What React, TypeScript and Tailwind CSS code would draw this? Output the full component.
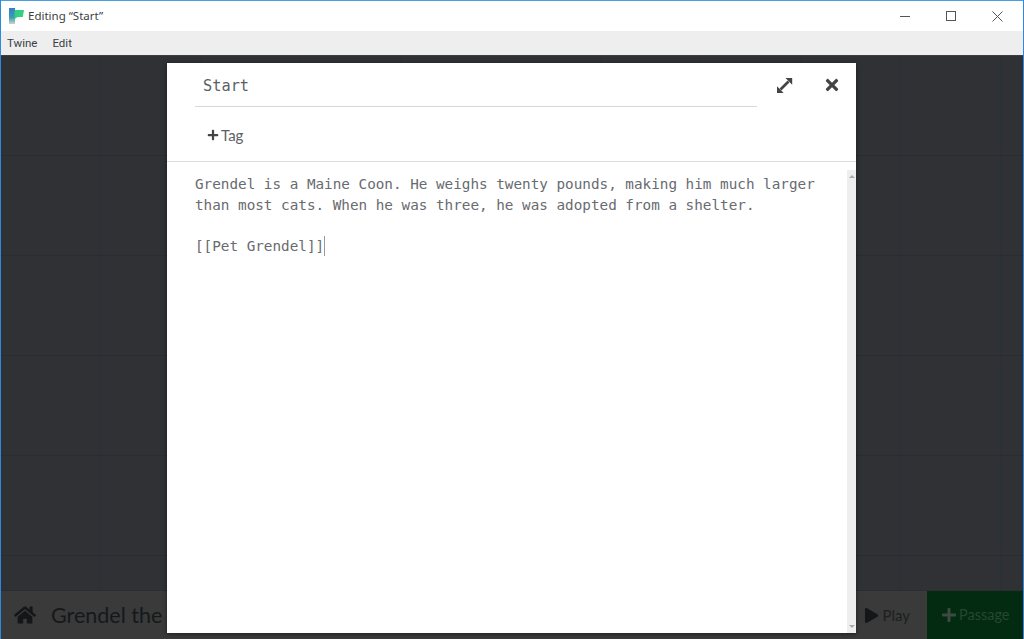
import { FaHome, FaPlay, FaPlus, FaTimes } from "react-icons/fa";

const lato = "font-['Lato','Open_Sans',sans-serif]";
const ui = "font-['Noto_Sans','Open_Sans',sans-serif]";
const menu = "font-['Roboto','Noto_Sans',sans-serif]";
const mono = "font-['DejaVu_Sans_Mono','Liberation_Mono',monospace]";

function TwineLogo() {
  return (
    <svg width="15" height="16" viewBox="0 0 15 16" className="shrink-0">
      <defs>
        <linearGradient id="twl" x1="0" y1="0" x2="0" y2="1">
          <stop offset="0" stopColor="#2f7fd0" />
          <stop offset="0.6" stopColor="#3f9bb0" />
          <stop offset="1" stopColor="#c8d8c8" />
        </linearGradient>
      </defs>
      <rect x="0" y="0" width="6" height="16" fill="url(#twl)" />
      <path d="M5.5 2H15l-1.2 7H10c-2.5 0-3.5 1-4.5 3z" fill="#34cf80" />
    </svg>
  );
}

function ExpandIcon() {
  return (
    <svg width="17" height="17" viewBox="0 0 17 17" className="shrink-0" fill="#444">
      <path d="M9.5 1h6.7v6.7z" />
      <path d="M1 9.3V16h6.7z" />
      <path d="M12.5 4.5l-8 8" stroke="#444" strokeWidth="2.6" fill="none" />
    </svg>
  );
}

export default function App() {
  return (
    <div className={`w-[1024px] h-[639px] flex flex-col overflow-hidden bg-white border-x border-[#2a8ae0] ${lato}`}>
      <div className="h-[31px] shrink-0 border-t border-[#4a9fe0] flex items-center pl-[8px] bg-white">
        <TwineLogo />
        <span className={`ml-[4px] text-[11.5px] text-[#3a3f45] ${ui}`}>Editing “Start”</span>
        <div className="ml-auto flex items-center h-full pr-[3px]">
          <div className="w-[46px] h-full flex items-center justify-center">
            <div className="w-[10px] h-px bg-[#555]" />
          </div>
          <div className="w-[46px] h-full flex items-center justify-center">
            <div className="w-[10px] h-[10px] border border-[#555]" />
          </div>
          <div className="w-[46px] h-full flex items-center justify-center">
            <svg width="11" height="11" viewBox="0 0 11 11" stroke="#555" strokeWidth="1" fill="none">
              <path d="M.5.5l10 10M10.5.5l-10 10" />
            </svg>
          </div>
        </div>
      </div>
      <div className={`h-[24px] shrink-0 bg-[#eeeeee] flex items-center pl-[6px] pt-[1px] gap-[15px] text-[11.5px] text-[#3a3f45] ${menu}`}>
        <span>Twine</span>
        <span>Edit</span>
      </div>
      <div className="relative flex-1 flex flex-col bg-[#2f3135] border-t border-[#3d3e40]">
        <div className="flex-1 bg-[linear-gradient(#2a2c30_1px,transparent_1px),linear-gradient(90deg,#27313a_1px,transparent_1px)] bg-[length:100px_100px] bg-[position:-1px_-1px]" />
        <div className="h-[49px] shrink-0 bg-[#393a39] border-t border-[#2c2d30] flex items-center">
          <FaHome className="ml-[13px] text-[22px] text-[#141618]" />
          <span className="ml-[15px] mt-[1px] text-[21.5px] text-[#16181b]">Grendel the</span>
          <div className="ml-auto flex h-full items-center">
            <div className="flex items-center pr-[17px] text-[#141618]">
              <FaPlay className="text-[15px]" />
              <span className="ml-[3px] text-[15px] text-[#1d1f20]">Play</span>
            </div>
            <div className="w-[96px] h-full bg-[#032b12] flex items-center pl-[14px]">
              <FaPlus className="text-[16px] text-[#3c4a40]" />
              <span className="ml-[2px] text-[14.5px] text-[#24492f]">Passage</span>
            </div>
          </div>
        </div>
        <div className="absolute left-[166px] top-[7px] w-[689px] h-[570px] bg-white shadow-[0_1px_4px_rgba(0,0,0,0.5)] flex flex-col">
          <div className="h-[99px] shrink-0 border-b border-[#dddddd] px-[28px] flex flex-col">
            <div className="flex items-start">
              <div className={`w-[562px] shrink-0 h-[44px] border-b border-[#d8d8d8] pl-[8px] pt-[3px] flex items-center text-[15.3px] text-[#5c6065] ${mono}`}>
                Start
              </div>
              <div className="ml-[19px] mt-[14px] shrink-0">
                <ExpandIcon />
              </div>
              <FaTimes className="ml-[30px] mt-[13px] shrink-0 text-[18px] text-[#444]" />
            </div>
            <div className="mt-[17px] ml-[12px] flex items-center text-[15px] text-[#5c6065]">
              <FaPlus className="text-[12px] text-[#444]" />
              <span className="ml-[2px]">Tag</span>
            </div>
          </div>
          <div className="relative flex-1 pl-[28px] pt-[12px]">
            <div className={`text-[14.3px] leading-[20.5px] text-[#686b70] whitespace-pre ${mono}`}>
              <div>Grendel is a Maine Coon. He weighs twenty pounds, making him much larger</div>
              <div>than most cats. When he was three, he was adopted from a shelter.</div>
              <div>&nbsp;</div>
              <div className="flex items-center">
                <span>[[Pet Grendel]]</span>
                <span className="inline-block w-px h-[20px] bg-[#999]" />
              </div>
            </div>
            <div className="absolute right-0 top-[8px] bottom-0 w-[9px] bg-[#eeeeee] flex flex-col items-center justify-between py-[5px]">
              <div className="w-0 h-0 border-x-[3px] border-x-transparent border-b-[3px] border-b-[#aaa]" />
              <div className="w-0 h-0 border-x-[3px] border-x-transparent border-t-[3px] border-t-[#aaa]" />
            </div>
          </div>
        </div>
      </div>
    </div>
  );
}
